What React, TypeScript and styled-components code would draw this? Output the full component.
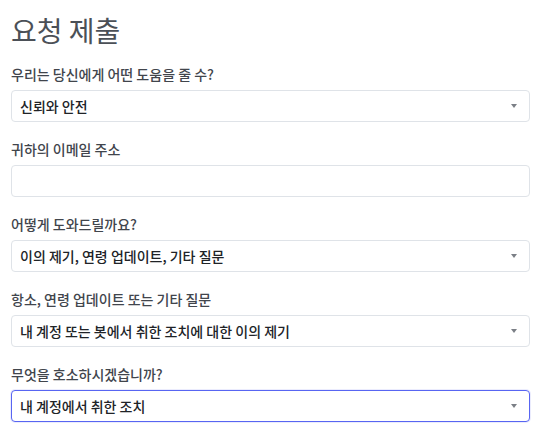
import styled, { createGlobalStyle } from "styled-components";

const GlobalStyle = createGlobalStyle`
  html, body {
    margin: 0;
    padding: 0;
    background: #ffffff;
  }
  body {
    font-family: "Noto Sans CJK KR", "Noto Sans", "Liberation Sans", sans-serif;
  }
`;

const Page = styled.div`
  padding: 13px 9px 0 11px;
  display: flex;
  flex-direction: column;
`;

const Title = styled.h1`
  margin: 0 0 17px;
  font-size: 28px;
  line-height: 34px;
  font-weight: 400;
  color: #4b5057;
`;

const Field = styled.div`
  display: flex;
  flex-direction: column;
  gap: 6px;
  margin-bottom: 17px;
`;

const Label = styled.label`
  font-size: 14px;
  line-height: 20px;
  font-weight: 500;
  color: #41454c;
`;

const Box = styled.div<{ focused?: boolean }>`
  position: relative;
  box-sizing: border-box;
  height: 32px;
  display: flex;
  align-items: center;
  padding: 0 30px 0 8px;
  border: 1px solid ${p => (p.focused ? "#5865f2" : "#dfe3e8")};
  border-radius: 4px;
  background: #fff;
  box-shadow: ${p => (p.focused ? "0 0 0 1px rgba(88,101,242,0.12)" : "none")};
  font-size: 14px;
  font-weight: 500;
  color: #202327;
  white-space: nowrap;
  overflow: hidden;
`;

const Caret = styled.span`
  position: absolute;
  right: 12px;
  top: 13px;
  width: 0;
  height: 0;
  border-left: 3px solid transparent;
  border-right: 3px solid transparent;
  border-top: 4px solid #7b7f86;
`;

type Item = { label: string; value?: string; select: boolean; focused?: boolean };

const items: Item[] = [
  { label: "우리는 당신에게 어떤 도움을 줄 수?", value: "신뢰와 안전", select: true },
  { label: "귀하의 이메일 주소", select: false },
  { label: "어떻게 도와드릴까요?", value: "이의 제기, 연령 업데이트, 기타 질문", select: true },
  { label: "항소, 연령 업데이트 또는 기타 질문", value: "내 계정 또는 봇에서 취한 조치에 대한 이의 제기", select: true },
  { label: "무엇을 호소하시겠습니까?", value: "내 계정에서 취한 조치", select: true, focused: true },
];

export default function App() {
  return (
    <>
      <GlobalStyle />
      <Page>
        <Title>요청 제출</Title>
        {items.map(it => (
          <Field key={it.label}>
            <Label>{it.label}</Label>
            <Box focused={it.focused}>
              {it.value}
              {it.select && <Caret />}
            </Box>
          </Field>
        ))}
      </Page>
    </>
  );
}
